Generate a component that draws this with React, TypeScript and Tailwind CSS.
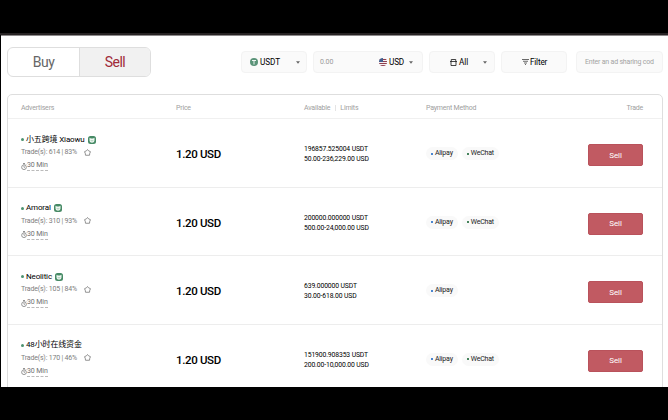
import React from "react";

type Offer = {
  name: string;
  badge: boolean;
  trades: string;
  available: string;
  limits: string;
  methods: { label: string; dot: string }[];
};

const ALIPAY = { label: "Alipay", dot: "bg-[#4a86d0]" };
const WECHAT = { label: "WeChat", dot: "bg-[#45835c]" };

const offers: Offer[] = [
  { name: "小五跨境 Xiaowu", badge: true, trades: "614 | 83%", available: "196857.525004 USDT", limits: "50.00-236,229.00 USD", methods: [ALIPAY, WECHAT] },
  { name: "Amoral", badge: true, trades: "310 | 93%", available: "200000.000000 USDT", limits: "500.00-24,000.00 USD", methods: [ALIPAY, WECHAT] },
  { name: "Neolitic", badge: true, trades: "105 | 84%", available: "639.000000 USDT", limits: "30.00-618.00 USD", methods: [ALIPAY] },
  { name: "48小时在线资金", badge: false, trades: "170 | 46%", available: "151900.908353 USDT", limits: "200.00-10,000.00 USD", methods: [ALIPAY, WECHAT] },
];

const columns = "grid grid-cols-[155px_128px_122px_162px_1fr] pl-[13px]";

function Caret() {
  return (
    <svg viewBox="0 0 6 4" className="h-[3px] w-[4px] shrink-0" fill="#666">
      <path d="M0 0h6L3 4z" />
    </svg>
  );
}

function TetherIcon() {
  return (
    <svg viewBox="0 0 16 16" className="size-[8px] shrink-0">
      <circle cx="8" cy="8" r="8" fill="#5b9479" />
      <path d="M4 5h8M8 5v8" stroke="#fff" strokeWidth="1.8" />
    </svg>
  );
}

function FlagIcon() {
  return (
    <svg viewBox="0 0 16 16" className="size-[8px] shrink-0">
      <clipPath id="flag">
        <circle cx="8" cy="8" r="8" />
      </clipPath>
      <g clipPath="url(#flag)">
        <path fill="#f4f0f2" d="M0 0h16v16H0z" />
        <path stroke="#8f3f4e" strokeWidth="2" d="M0 3h16M0 7h16M0 11h16M0 15h16" />
        <path fill="#42608f" d="M0 0h8v8H0z" />
      </g>
    </svg>
  );
}

function WalletIcon() {
  return (
    <svg viewBox="0 0 14 14" className="size-[7px] shrink-0" fill="none" stroke="#222" strokeWidth="1.7">
      <path d="M2.5 5V1h9v4M0 5h14M2 5v8h10V5" />
    </svg>
  );
}

function FilterIcon() {
  return (
    <svg viewBox="0 0 14 12" className="h-[6px] w-[7px] shrink-0" fill="none" stroke="#444" strokeWidth="1.6">
      <path d="M0 1h14M2 4.500h10M4 8h6M6 11h2" />
    </svg>
  );
}

function MerchantBadge() {
  return (
    <svg viewBox="0 0 16 16" className="block size-[8px] shrink-0">
      <rect width="16" height="16" rx="5" fill="#468a65" />
      <path fill="#eef7f1" d="M3 3.500l3 1.500h4l3-1.500V9c-.5 3-2.500 4.500-5 4.500S3.500 12 3 9z" />
      <path d="M5.500 8.500c1 2 4 2 5 0" fill="none" stroke="#6fa686" strokeWidth="1.200" />
    </svg>
  );
}

function PentagonIcon() {
  return (
    <svg viewBox="0 0 14 14" className="size-[7px] shrink-0" fill="none" stroke="#808080" strokeWidth="1.7" strokeLinejoin="round">
      <path d="M7 1l2 2.500 4 1.900-1.500 3.100-.5 4H3l-.5-4L1 5.400l4-1.900z" />
    </svg>
  );
}

function StopwatchIcon() {
  return (
    <svg viewBox="0 0 12 14" className="h-[7px] w-[6px] shrink-0" fill="none" stroke="#777" strokeWidth="1.500">
      <circle cx="6" cy="8.500" r="4.700" />
      <path d="M4 1h4M6 1v2.500M6 6v2.500l1.500 1M10 3l1 1" />
    </svg>
  );
}

function ToolButton({ className, children }: { className: string; children: React.ReactNode }) {
  return (
    <div className={`flex h-[22px] shrink-0 items-center rounded-[4px] border border-[#f3f3f3] bg-[#fafafa] text-[8.200px] text-black ${className}`}>
      {children}
    </div>
  );
}

function OfferRow({ offer }: { offer: Offer }) {
  return (
    <div className={`${columns} h-[68.500px] shrink-0 border-b border-[#ededed]`}>
      <div className="flex flex-col pt-[15.500px]">
        <div className="flex h-[10px] items-center whitespace-nowrap text-[8px] leading-[10px] tracking-[-0.150px] text-black">
          <i className="mr-[2px] size-[3px] shrink-0 rounded-full bg-[#4c9370]" />
          <span>{offer.name}</span>
          {offer.badge && <span className="ml-[3px]"><MerchantBadge /></span>}
        </div>
        <div className="mt-[2.500px] flex h-[10px] items-center text-[7px] leading-[10px] tracking-[-0.180px] text-[#7d7d7d]">
          <span className="w-[63px] whitespace-nowrap">Trade(s): {offer.trades}</span>
          <PentagonIcon />
        </div>
        <div className="mt-[4px] flex h-[10px] items-center text-[7px] leading-[9px] tracking-[-0.100px] text-[#707070]">
          <StopwatchIcon />
          <span className="border-b border-dashed border-[#bbb]">30 Min</span>
        </div>
      </div>
      <div className="pt-[28px] text-[11.500px] font-medium leading-[14px] tracking-[-0.350px] text-black">1.20 USD</div>
      <div className="whitespace-nowrap pt-[25px] text-[6.800px] leading-[10px] tracking-[-0.120px] text-black">
        <div>{offer.available}</div>
        <div>{offer.limits}</div>
      </div>
      <div className="flex items-start gap-[4px] pt-[28px]">
        {offer.methods.map((method) => (
          <span key={method.label} className="flex h-[13px] items-center gap-[2px] rounded-full bg-[#f9f9f9] px-[5px] text-[7px] tracking-[-0.200px] text-[#222]">
            <i className={`size-[2px] ${method.dot}`} />
            {method.label}
          </span>
        ))}
      </div>
      <button className="mt-[25px] h-[22px] w-[55px] rounded-[2px] border border-[#b9525b] bg-[#c15a62] pt-px text-[8px] tracking-[-0.100px] text-white">
        Sell
      </button>
    </div>
  );
}

export default function App() {
  return (
    <div className="flex h-[420px] w-[668px] flex-col overflow-hidden bg-black font-['Roboto','Noto_Sans_CJK_SC',sans-serif]">
      <div className="h-[33px] shrink-0" />
      <div className="h-[2px] shrink-0 bg-[#272324]" />
      <main className="ml-px flex h-[352px] shrink-0 flex-col overflow-hidden border-t border-[#8d8a8b] bg-white pl-[6px] pr-[5px] pt-[11px]">
        <div className="flex h-[30px] shrink-0 items-center">
          <div className="flex h-[30px] w-[144px] overflow-hidden rounded-[6px] border border-[#dedede] text-[14px] tracking-[-0.500px]">
            <div className="flex w-[72px] items-center justify-center border-r border-[#dedede] pt-px text-[#666]">Buy</div>
            <div className="flex flex-1 items-center justify-center bg-[#f1f1f1] pt-px text-[#a02a38]">Sell</div>
          </div>
          <ToolButton className="ml-[90px] w-[66px] pl-[8px] pr-[6px]">
            <TetherIcon />
            <span className="ml-[2px] flex-1 tracking-[-0.100px]">USDT</span>
            <Caret />
          </ToolButton>
          <ToolButton className="ml-[6px] w-[110px] pl-[6px] pr-[9px]">
            <span className="flex-1 text-[7px] tracking-[-0.100px] text-[#999]">0.00</span>
            <FlagIcon />
            <span className="ml-[2px] mr-[5px] tracking-[-0.200px]">USD</span>
            <Caret />
          </ToolButton>
          <ToolButton className="ml-[6px] w-[66px] pl-[20px] pr-[7px]">
            <WalletIcon />
            <span className="ml-[2px] flex-1">All</span>
            <Caret />
          </ToolButton>
          <ToolButton className="ml-[6px] w-[66px] pl-[20px]">
            <FilterIcon />
            <span className="ml-px tracking-[-0.200px]">Filter</span>
          </ToolButton>
          <ToolButton className="ml-[9px] w-[87px] pl-[8px]">
            <span className="whitespace-nowrap text-[7px] tracking-[-0.200px] text-[#a3a3a3]">Enter an ad sharing cod</span>
          </ToolButton>
        </div>
        <section className="mt-[17px] flex h-[330px] w-[656px] shrink-0 flex-col rounded-t-[5px] border border-[#dedede]">
          <div className={`${columns} h-[24px] shrink-0 items-center border-b border-[#f0f0f0] pt-[3px] text-[7px] tracking-[-0.200px] text-[#a0a0a0]`}>
            <span>Advertisers</span>
            <span>Price</span>
            <span className="flex items-center">
              Available<i className="mx-[4.500px] h-[6px] w-px bg-[#e4e4e4]" />Limits
            </span>
            <span>Payment Method</span>
            <span className="pl-[38.500px]">Trade</span>
          </div>
          {offers.map((offer) => (
            <OfferRow key={offer.name} offer={offer} />
          ))}
        </section>
      </main>
    </div>
  );
}
